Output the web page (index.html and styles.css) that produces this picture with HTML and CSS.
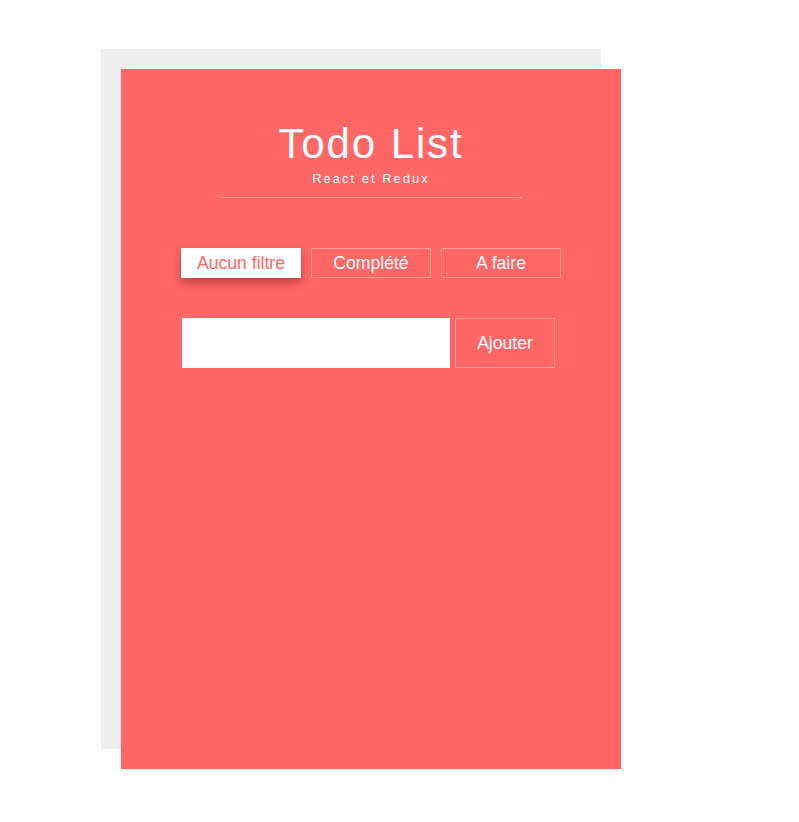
FILE: index.html
```html
<!DOCTYPE html>
<html lang="fr">
<head>
<meta charset="utf-8">
<title>Todo List</title>
<link rel="stylesheet" href="styles.css">
</head>
<body>
<div class="page">
  <main class="card">
    <header class="header">
      <h1 class="title">Todo List</h1>
      <p class="subtitle">React et Redux</p>
    </header>
    <nav class="filters">
      <button class="filter filter-active">Aucun filtre</button>
      <button class="filter">Complété</button>
      <button class="filter">A faire</button>
    </nav>
    <form class="add-form">
      <input class="add-input" type="text">
      <button class="add-btn" type="button">Ajouter</button>
    </form>
  </main>
</div>
</body>
</html>
```
FILE: styles.css
```css
html, body {
  margin: 0;
  padding: 0;
  background: #fff;
}
body {
  font-family: "Liberation Sans", Arial, sans-serif;
}
.page {
  padding: 69px 0 0 121px;
}
.card {
  width: 500px;
  height: 700px;
  background: #ff6666;
  box-shadow: -20px -20px 0 #eeeeee;
  box-sizing: border-box;
  display: flex;
  flex-direction: column;
  align-items: center;
}
.header {
  width: 302px;
  margin-top: 51px;
  text-align: center;
  border-bottom: 1px solid rgba(255, 255, 255, 0.35);
  padding-bottom: 11px;
}
.title {
  margin: 0;
  font-weight: normal;
  font-size: 42px;
  line-height: 48px;
  letter-spacing: 1.9px;
  color: #fff;
}
.subtitle {
  margin: 3px 0 0;
  font-size: 13px;
  line-height: 15px;
  letter-spacing: 2px;
  color: #fff;
}
.filters {
  display: flex;
  gap: 10px;
  margin-top: 50px;
}
.filter {
  width: 120px;
  height: 30px;
  box-sizing: border-box;
  border: 1px solid rgba(255, 255, 255, 0.35);
  background: transparent;
  color: #fff;
  font-family: "Liberation Sans", Arial, sans-serif;
  font-size: 17.6px;
  padding: 0;
  cursor: pointer;
}
.filter-active {
  background: #fff;
  color: #ff6666;
  border-color: #fff;
  box-shadow: 0 5px 10px rgba(120, 20, 20, 0.45);
}
.add-form {
  display: flex;
  gap: 5px;
  margin: 40px 5px 0 0;
}
.add-input {
  width: 268px;
  height: 50px;
  box-sizing: border-box;
  border: none;
  background: #fff;
  margin: 0;
  padding: 0 10px;
  outline: none;
}
.add-btn {
  width: 100px;
  height: 50px;
  box-sizing: border-box;
  border: 1px solid rgba(255, 255, 255, 0.35);
  background: transparent;
  color: #fff;
  font-family: "Liberation Sans", Arial, sans-serif;
  font-size: 17.6px;
  padding: 0;
}
```
